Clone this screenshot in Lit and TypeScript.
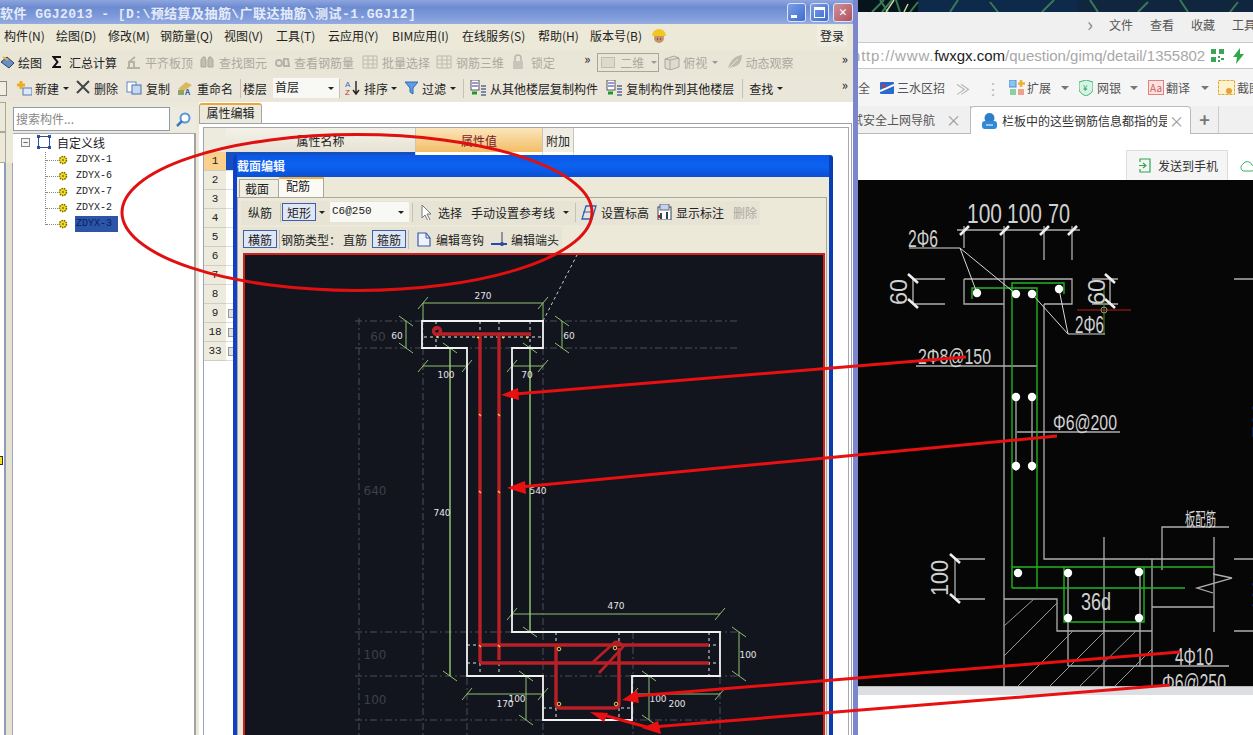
import { LitElement, html, css, svg, nothing } from 'lit'
import { customElement } from 'lit/decorators.js'

const ic: Record<string, any> = {
    layers: svg`<path d="M1 8l6-5 7 6-5 5z" fill="#6a8fc8" stroke="#345"/><path d="M3 3l5 3" stroke="#e8b030" stroke-width="2"/>`,
    sigma: svg`<path d="M9 3H1.500L5.500 8 1.500 13H9" fill="none" stroke="#111" stroke-width="2"/>`,
    align: svg`<path d="M2 14h13M4 14V8h5v6M10 3L4 8" fill="none" stroke="#b5b3a8" stroke-width="2"/>`,
    binoc: svg`<path d="M2 13V6l2-3h2l1 3v7zM9 13V6l1-3h2l2 3v7z" fill="#c2bfb0" stroke="#aaa89a"/>`,
    look: svg`<path d="M1 9a3 3 0 0 1 6 0 3 3 0 0 1-6 0M9 5h4l1 7H9z" fill="none" stroke="#b5b3a8" stroke-width="2"/>`,
    grid: svg`<path d="M1 2h14v12H1zM1 6h14M1 10h14M6 2v12M11 2v12" fill="none" stroke="#bcbaae"/>`,
    lock: svg`<rect x="1" y="7" width="10" height="8" fill="#c8c6ba"/><path d="M3 7V4a3 3 0 0 1 6 0v3" fill="none" stroke="#b8b6aa" stroke-width="1.500"/>`,
    cube: svg`<path d="M2 5l9-3 5 2v9l-9 3-5-2z" fill="#dedcd0" stroke="#aaa89c"/><path d="M7 6v10M7 6l9-2M2 5l5 1" stroke="#aaa89c" fill="none"/>`,
    orbit: svg`<path d="M1 15C3 6 8 2 15 1c0 7-4 12-10 12z" fill="#bdbbae"/><path d="M1 15L11 5" stroke="#e8e6da"/>`,
    add: svg`<path d="M5 1v8M1 5h8" stroke="#e8b020" stroke-width="3"/><rect x="7" y="8" width="9" height="7" fill="#dce8f6" stroke="#5a7ab0"/>`,
    del: svg`<path d="M1 1l12 12M13 1L1 13" stroke="#444" stroke-width="2"/>`,
    copy: svg`<rect x="1" y="2" width="9" height="10" fill="#fff" stroke="#6688bb"/><rect x="6" y="5" width="9" height="9" fill="#c4d8f0" stroke="#4a70a8"/>`,
    rename: svg`<path d="M1 9l8-7 6 3-8 6z" fill="#d8b860"/><path d="M1 10h6v5H1z" fill="#88a868"/><text x="8" y="15" font-size="8" font-weight="700" fill="#2a60a8">A</text>`,
    sort: svg`<text x="0" y="7" font-size="8" fill="#3868b8" font-family="Liberation Sans">A</text><text x="0" y="15" font-size="8" fill="#b83030" font-family="Liberation Sans">Z</text><path d="M11 1v12M8 10l3 4 3-4" fill="none" stroke="#222" stroke-width="1.400"/>`,
    filter: svg`<path d="M0 2h13L8 8v6l-3-2V8z" fill="#5f9be0" stroke="#2f6cb8"/>`,
    floorIn: svg`<rect x="1" y="0" width="8" height="10" fill="#fff" stroke="#555"/><path d="M2 3h6M2 6h6" stroke="#33a"/><path d="M2 13h5" stroke="#1a9a2a" stroke-width="3"/><path d="M11 6h5M11 9h5M11 12h5M11 15h5" stroke="#5a6a90" stroke-width="1.400"/>`,
    cursor: svg`<path d="M1 1l9 9H6l3 6-2 1-3-6-3 3z" fill="#fff" stroke="#777"/>`,
    level: svg`<path d="M5 2h10l-4 13H1z" fill="none" stroke="#2a60b8" stroke-width="1.300"/><path d="M2 8h10" stroke="#2a60b8"/>`,
    mark: svg`<rect x="1" y="3" width="13" height="13" fill="#fff" stroke="#345"/><rect x="3" y="0" width="9" height="6" fill="#c4d4ec" stroke="#667"/><path d="M4 9v6M10 8v7" stroke="#345" stroke-width="2"/><rect x="1" y="11" width="2" height="3" fill="#c22"/>`,
    hook: svg`<path d="M2 2h8l4 5v8H2z" fill="#eef2fa" stroke="#3a5aa8" stroke-width="1.200"/><path d="M10 2v5h4" fill="none" stroke="#3a5aa8"/>`,
    end: svg`<path d="M0 13h16" stroke="#2a4aa8" stroke-width="2"/><path d="M11 1v14" stroke="#667" stroke-width="1.300"/><circle cx="11" cy="13" r="2" fill="#2a4aa8"/>`,
}

interface Tool { ml?: number; i?: string; iw?: number; gap?: number; t?: string; dis?: boolean; kind?: string }

const row1: Tool[] = [
    { ml: 0, i: 'layers', iw: 14, gap: 4, t: '绘图' },
    { ml: 10, i: 'sigma', iw: 10, gap: 7, t: '汇总计算' },
    { ml: 8, i: 'align', iw: 16, gap: 4, t: '平齐板顶', dis: true },
    { ml: 6, i: 'binoc', iw: 16, gap: 4, t: '查找图元', dis: true },
    { ml: 8, i: 'look', iw: 16, gap: 3, t: '查看钢筋量', dis: true },
    { ml: 8, i: 'grid', iw: 16, gap: 4, t: '批量选择', dis: true },
    { ml: 6, i: 'grid', iw: 16, gap: 4, t: '钢筋三维', dis: true },
    { ml: 8, i: 'lock', iw: 12, gap: 7, t: '锁定', dis: true },
    { ml: 29, kind: 'chev' },
    { ml: 7, kind: 'view2d' },
    { ml: 4, i: 'cube', iw: 17, gap: 3, t: '俯视', dis: true },
    { ml: 5, kind: 'arrow', dis: true },
    { ml: 9, i: 'orbit', iw: 16, gap: 2, t: '动态观察', dis: true },
    { kind: 'chevEnd' },
]

const row2: Tool[] = [
    { kind: 'stub' },
    { ml: 9, i: 'add', iw: 16, gap: 3, t: '新建' },
    { ml: 4, kind: 'arrow' },
    { ml: 7, i: 'del', iw: 14, gap: 4, t: '删除' },
    { ml: 8, i: 'copy', iw: 16, gap: 4, t: '复制' },
    { ml: 7, i: 'rename', iw: 16, gap: 4, t: '重命名' },
    { ml: 7, kind: 'sep' },
    { ml: 2, t: '楼层' },
    { ml: 6, kind: 'floor' },
    { ml: 0, kind: 'sep' },
    { ml: 5, i: 'sort', iw: 16, gap: 3, t: '排序' },
    { ml: 3, kind: 'arrow' },
    { ml: 8, i: 'filter', iw: 13, gap: 4, t: '过滤' },
    { ml: 4, kind: 'arrow' },
    { ml: 7, kind: 'sep' },
    { ml: 6, i: 'floorIn', iw: 16, gap: 4, t: '从其他楼层复制构件' },
    { ml: 8, i: 'floorIn', iw: 16, gap: 4, t: '复制构件到其他楼层' },
    { ml: 8, kind: 'sep' },
    { ml: 6, t: '查找' },
    { ml: 4, kind: 'arrow' },
    { kind: 'chevEnd' },
]

const dlg1: Tool[] = [
    { ml: 7, t: '纵筋' },
    { ml: 8, kind: 'sep' },
    { ml: 1, kind: 'btn', t: '矩形' },
    { ml: 3, kind: 'arrow' },
    { ml: 5, kind: 'rebar' },
    { ml: 3, kind: 'sep' },
    { ml: 8, i: 'cursor', iw: 11, gap: 6, t: '选择' },
    { ml: 9, t: '手动设置参考线' },
    { ml: 8, kind: 'arrow' },
    { ml: 6, kind: 'sep' },
    { ml: 5, i: 'level', iw: 16, gap: 4, t: '设置标高' },
    { ml: 8, i: 'mark', iw: 15, gap: 4, t: '显示标注' },
    { ml: 9, t: '删除', dis: true },
]

const dlg2: Tool[] = [
    { ml: 2, kind: 'btn', t: '横筋' },
    { ml: 2, kind: 'sep' },
    { ml: 1, t: '钢筋类型：' },
    { ml: 2, t: '直筋' },
    { ml: 5, kind: 'btn', t: '箍筋' },
    { ml: 2, kind: 'sep' },
    { ml: 7, i: 'hook', iw: 16, gap: 4, t: '编辑弯钩' },
    { ml: 7, i: 'end', iw: 16, gap: 4, t: '编辑端头' },
]

const menus: [string, number][] = [
    ['构件(N)', 52], ['绘图(D)', 52], ['修改(M)', 52], ['钢筋量(Q)', 64], ['视图(V)', 52], ['工具(T)', 52],
    ['云应用(Y)', 64], ['BIM应用(I)', 70], ['在线服务(S)', 76], ['帮助(H)', 52], ['版本号(B)', 62],
]
const rowNums = ['1', '2', '3', '4', '5', '6', '7', '8', '9', '18', '33']
const members = ['ZDYX-1', 'ZDYX-6', 'ZDYX-7', 'ZDYX-2', 'ZDYX-3']

const GREEN = '#8fc070'

// dimension with its two slashed ticks
const dimH = (x1: number, x2: number, y: number, c = GREEN) => svg`
    <path d="M${x1} ${y}H${x2}M${x1 - 5} ${y + 6}l10-12M${x2 - 5} ${y + 6}l10-12" stroke="${c}" fill="none"/>`
const dimV = (x: number, y1: number, y2: number, c = GREEN) => svg`
    <path d="M${x} ${y1}V${y2}M${x - 7} ${y1 - 5}l14 10M${x - 7} ${y2 - 5}l14 10" stroke="${c}" fill="none"/>`
const lbl = (x: number, y: number, t: string, fill = '#e4e4e4', fs = 9) => svg`
    <text x="${x}" y="${y}" fill="${fill}" font-size="${fs}" text-anchor="middle" font-family="DejaVu Sans, sans-serif">${t}</text>`
const cad = (x: number, y: number, w: number, t: string, fs = 24) => svg`
    <text x="${x}" y="${y}" fill="#d0d0d0" font-size="${fs}" textLength="${w}" lengthAdjust="spacingAndGlyphs" font-family="Liberation Sans, sans-serif">${t}</text>`
const cadV = (x: number, y: number, t: string, fs = 24, w = 26) => svg`
    <text transform="translate(${x} ${y}) rotate(-90)" fill="#d0d0d0" font-size="${fs}" textLength="${w}" lengthAdjust="spacingAndGlyphs" font-family="Liberation Sans, sans-serif">${t}</text>`

@customElement('app-root')
export class AppRoot extends LitElement {
    renderTool(t: Tool) {
        const ml = `margin-left:${t.ml ?? 0}px`
        switch (t.kind) {
            case 'stub': return html`<span class="stub"></span>`
            case 'sep': return html`<span class="sep" style=${ml}></span>`
            case 'arrow': return html`<span class="arrow ${t.dis ? 'dis' : ''}" style=${ml}></span>`
            case 'chev': return html`<span class="chev" style=${ml}>»</span>`
            case 'chevEnd': return html`<span class="chev end">»</span>`
            case 'btn': return html`<span class="btn" style=${ml}>${t.t}</span>`
            case 'view2d': return html`<span class="view2d" style=${ml}><i></i><b>二维</b><span class="arrow dis"></span></span>`
            case 'floor': return html`<span class="combo floor" style=${ml}><b>首层</b><span class="arrow"></span></span>`
            case 'rebar': return html`<span class="combo rebar" style=${ml}><b>C6@250</b><span class="arrow"></span></span>`
        }
        return html`<span class="tool ${t.dis ? 'dis' : ''}" style=${ml}>
            ${t.i ? html`<svg width=${t.iw!} height="16" viewBox="0 0 ${t.iw} 16" style="margin-right:${t.gap}px">${ic[t.i]}</svg>` : nothing}
            ${t.t}
        </span>`
    }

    renderDrawing() {
        return html`<svg class="draw" viewBox="245 255 579 480" width="579" height="480">
            <g stroke="#4c4f56" fill="none" stroke-dasharray="7 3 2 3">
                <path d="M355 321H740M355 348H740M355 632H740M355 676H740M355 720H740"/>
                <path d="M359 318V735M423 318V735M467 348V735M543 348V735M633 632V735M720 632V735"/>
            </g>
            ${lbl(378, 341, '60', '#3d4047', 12)} ${lbl(375, 495, '640', '#3d4047', 12)}
            ${lbl(375, 659, '100', '#3d4047', 12)} ${lbl(375, 704, '100', '#3d4047', 12)}
            <path d="M543 321L577 255" stroke="#c8c8c8" stroke-dasharray="3 3"/>

            <path d="M423 303V320M543 303V320M450 348V676M530 348V632" stroke="${GREEN}" fill="none"/>
            ${dimH(423, 543, 303)} ${dimV(406, 321, 348)} ${dimV(562, 321, 348)}
            ${dimH(423, 467, 366)} ${dimH(512, 543, 366)}
            ${dimV(450, 348, 676)} ${dimV(530, 348, 632)}
            ${dimH(512, 720, 614)} ${dimV(739, 632, 676)}
            ${dimH(467, 543, 694)} ${dimH(633, 720, 694)}
            ${dimV(526, 676, 720)} ${dimV(649, 676, 720)}
            ${lbl(483, 299, '270')} ${lbl(397, 339, '60')} ${lbl(569, 339, '60')}
            ${lbl(446, 378, '100')} ${lbl(527, 378, '70')} ${lbl(442, 516, '740')}
            ${lbl(538, 494, '540')} ${lbl(616, 609, '470')} ${lbl(748, 658, '100')}
            ${lbl(505, 707, '170')} ${lbl(517, 702, '100')} ${lbl(658, 702, '100')} ${lbl(677, 707, '200')}

            <g stroke="#e6e6e6" fill="none" stroke-dasharray="3 3">
                <path d="M424 337H542M467 645H720M467 663H720M543 708H633"/>
                <path d="M436 321V348M480 321V348M499 321V348M530 321V348M480 645V676M499 645V676M709 632V676M556 708V720M619 708V720M556 632V645M619 632V645"/>
            </g>
            <path d="M422 321H543V348H512V632H720V676H632V720H543V676H467V348H422Z" fill="none" stroke="#f2f2f2" stroke-width="1.800"/>

            <g stroke="#b81f27" stroke-width="3.400" fill="none">
                <path d="M438 334H531"/>
                <circle cx="437" cy="331" r="3.500"/>
                <path d="M480 333V660Q480 663 483 663H709M499 333V660"/>
                <path d="M480 645H709"/>
                <path d="M556 645V704Q556 708 560 708H615Q619 708 619 704V648"/>
                <path d="M593 662L615 642Q620 641 623 647L599 673" stroke-width="2.600"/>
            </g>
            <g fill="#12151e" stroke="#f0c850">
                <circle cx="559" cy="649" r="1.800"/><circle cx="615" cy="648" r="1.800"/>
                <circle cx="559" cy="704" r="1.800"/><circle cx="616" cy="704" r="1.800"/>
            </g>
            <path d="M479 414l2 2M498 414l2 2M479 491l2 2M498 491l2 2M437 336l1 2M477 337l2 1M502 337l2 1M526 337l2 1M479 645l2 2M498 645l2 2" stroke="#f0c850" stroke-width="1.400"/>
        </svg>`
    }

    renderCad() {
        return html`<svg class="cad" viewBox="858 179 395 506" width="395" height="506">
            <g stroke="#aeaeae" fill="none" stroke-width="1.300">
                <path d="M1004 259V685M1044 303V558H1214M964 278H1072V303H1044M1004 303H964V278"/>
                <path d="M915 278H945M915 303H945M1092 278H1118M1092 303H1118M957 229H1080M964 225V247M1004 225V259M1044 225V259M1072 225V259"/>
                <path d="M1234 278H1253M1234 558H1253M1234 630H1253"/>
                <path d="M1152 558V685M1152 606H1214M1214 536V631M1213 573L1232 577L1197 587L1213 592"/>
                <path d="M1162 569V526H1229"/>
                <path d="M1004 598H1057V630H1152M1068 572V665M1140 572V665M1068 665H1229M1104 536V685"/>
                <path d="M916 365H1037M1017 431H1120M1016 396V470M1032 396V470M955 558H985M955 598H985M955 558V598"/>
            </g>
            <path d="M913 278V303" stroke="#eee"/><path d="M1110 278V303" stroke="#eee"/>
            <path d="M960 234l9-9M1000 234l9-9M1040 234l9-9M1068 234l9-9M908 273l10 9M908 298l10 9M1105 273l10 9M1105 298l10 9M950 553l10 9M950 593l10 9" stroke="#eee" stroke-width="2.600"/>
            <path d="M1004 625L1034 598M1004 655L1057 602M1018 685L1073 630M1050 685L1104 631M1080 685L1136 630M1115 685L1152 648" stroke="#9a9a9a"/>
            <g stroke="#22b422" fill="none" stroke-width="1.400">
                <path d="M972 298V287H1037V587M1012 587V282H1064V293"/>
                <path d="M1012 566H1214M1012 587H1185M1064 566V621H1144V566"/>
                <path d="M1104 287V333" stroke-width="1" stroke="#3c8a3c"/>
            </g>
            <path d="M1077 309H1131" stroke="#c01818"/><circle cx="1104" cy="309" r="3" fill="none" stroke="#88a060"/>
            <path d="M909 247H960L977 292M960 247L1016 293M1032 293L1068 333L1059 288M1068 333H1105" stroke="#d8d8d8" fill="none"/>
            <g fill="#fff">
                ${[[977, 292], [1016, 293], [1032, 293], [1059, 288], [1016, 396], [1032, 396], [1016, 465], [1032, 465], [1018, 572], [1068, 572], [1139, 571], [1068, 617], [1139, 617]].map(([x, y]) => svg`<circle cx=${x} cy=${y} r="4.200"/>`)}
            </g>
            ${cad(967, 222, 35, '100', 27)} ${cad(1007, 222, 35, '100', 27)} ${cad(1048, 222, 22, '70', 27)}
            ${cad(908, 246, 30, '2Φ6', 23)} ${cad(1075, 332, 29, '2Φ6', 23)}
            ${cad(918, 363, 73, '2Φ8@150', 22)} ${cad(1053, 429, 64, 'Φ6@200', 22)}
            ${cad(1081, 609, 30, '36d', 23)} ${cad(1175, 664, 38, '4Φ10', 23)} ${cad(1162, 690, 64, 'Φ6@250', 23)}
            ${cadV(907, 304, '60')} ${cadV(1105, 304, '60')} ${cadV(948, 595, '100', 24, 36)} ${cadV(1270, 437, '700', 24, 36)} ${cadV(1270, 610, '100', 24, 32)}
            <text x="1185" y="525" fill="#d8d8d8" font-size="18" font-family="Noto Sans CJK SC, sans-serif" textLength="31" lengthAdjust="spacingAndGlyphs">板配筋</text>
        </svg>`
    }

    render() {
        return html`<div class="app">
            <section class="browser">
                <svg class="palm" width="395" height="12" viewBox="0 0 395 12">
                    <rect width="395" height="12" fill="#06141c"/>
                    <rect x="60" width="160" height="12" fill="#0d2a4a"/><rect x="220" width="175" height="12" fill="#10263e"/>
                    <path d="M14 12L26 0M24 12L34 0M30 12L22 0M42 12L38 0M52 12L60 2M92 12L100 0M140 12L132 2M184 12L196 0M240 12L232 0M280 12L290 2M330 12L322 0M372 12L380 2" stroke="#3a7a56" stroke-width="2"/>
                    <path d="M28 12L36 0M46 12L50 4" stroke="#c8d8a0" stroke-width="1.500"/>
                </svg>
                <div class="b-menu"><span class="gt">›</span><span>文件</span><span>查看</span><span>收藏</span><span>工具</span></div>
                <div class="b-url">
                    <div class="url"><span>http://www.</span><b>fwxgx.com</b>/question/gimq/detail/1355802</div>
                    <svg width="13" height="13" viewBox="0 0 13 13"><path d="M0 0h5v5H0zM8 0h5v5H8zM0 8h5v5H0zM7 7h2v2H7zM10 9h3v2h-3zM7 11h2v2H7z" fill="#3aa655"/></svg>
                    <svg width="13" height="16" viewBox="0 0 13 16"><path d="M8 0L1 9h4l-1 7 8-10H8z" fill="#2fa84a"/></svg>
                </div>
                <div class="b-marks">
                    <span style="margin-right:10px">全</span>
                    <svg width="14" height="12" viewBox="0 0 14 12" style="margin-right:3px"><rect width="14" height="12" rx="1" fill="#2a6acc"/><path d="M0 9L14 3" stroke="#fff" stroke-width="2"/><path d="M2 3l4 2" stroke="#d33" stroke-width="2"/></svg>
                    <span>三水区招</span><span class="dbl">≫</span><span class="dots">⋮</span>
                    <svg width="16" height="16" viewBox="0 0 16 16" style="margin-right:2px"><rect width="7" height="7" fill="#8cc4f0" stroke="#4a90d0"/><rect x="1" y="9" width="6" height="6" fill="#8ad0a0"/><rect x="9" y="9" width="6" height="6" fill="#f0a090"/><path d="M12 0v7M9 3.500h7" stroke="#f0b030" stroke-width="2.500"/></svg>
                    <span>扩展</span><span class="down" style="margin:0 10px"></span>
                    <svg width="14" height="16" viewBox="0 0 14 16" style="margin-right:4px"><path d="M7 0l7 2v7q0 4-7 7-7-3-7-7V2z" fill="#d8f2e4" stroke="#3cb878"/><text x="4" y="11" font-size="8" fill="#2a9a60">¥</text></svg>
                    <span>网银</span><span class="down" style="margin:0 10px 0 9px"></span>
                    <span class="aa">Aa</span><span>翻译</span><span class="down" style="margin:0 9px 0 11px"></span>
                    <svg width="17" height="15" viewBox="0 0 17 15" style="margin-right:2px"><rect x=".5" y=".5" width="16" height="14" fill="#fdf2d0" stroke="#e0a830" stroke-dasharray="3 1"/><circle cx="11" cy="11" r="3" fill="#e8a030"/></svg>
                    <span>截图</span>
                </div>
                <div class="b-tabs">
                    <div class="tab-off"><span>试安全上网导航</span><i>×</i></div>
                    <div class="tab-on">
                        <svg width="15" height="16" viewBox="0 0 15 16"><circle cx="7.500" cy="5" r="5" fill="#2f7fc8"/><rect y="8" width="15" height="8" rx="3" fill="#2f8ad8"/><path d="M4 12h7" stroke="#fff"/></svg>
                        <span>栏板中的这些钢筋信息都指的是</span><i>×</i>
                    </div>
                    <b class="plus">+</b>
                </div>
                <div class="b-send">
                    <div class="send">
                        <svg width="12" height="15" viewBox="0 0 12 15"><path d="M1 4V1h10v13H1v-3M0 7.500h6M4 5l3 2.500L4 10" fill="none" stroke="#2fa84a" stroke-width="1.200"/></svg>
                        <span>发送到手机</span>
                    </div>
                    <svg class="cloud" width="18" height="12" viewBox="0 0 18 12"><path d="M5 11a4 4 0 0 1 0-7 5 5 0 0 1 9 1 3 3 0 0 1 0 6z" fill="none" stroke="#3cb060"/></svg>
                </div>
                ${this.renderCad()}
                <div class="b-status"></div>
            </section>

            <section class="ggj">
                <header class="title">
                    <span>软件 GGJ2013 - [D:\\预结算及抽筋\\广联达抽筋\\测试-1.GGJ12]</span>
                    <div class="caps">
                        <span class="cap"><i class="min"></i></span>
                        <span class="cap"><i class="max"></i></span>
                        <span class="cap close">✕</span>
                    </div>
                </header>
                <nav class="menu">
                    ${menus.map(([m, w]) => html`<span style="width:${w}px">${m}</span>`)}
                    <svg class="hat" width="16" height="16" viewBox="0 0 16 16"><circle cx="8" cy="10" r="5" fill="#c89068"/><path d="M1 8a7 7 0 0 1 14 0z" fill="#f0c820"/><path d="M6 11h1M9 11h1" stroke="#222"/></svg>
                    <span class="login">登录</span>
                </nav>
                <div class="bar">${row1.map(t => this.renderTool(t))}</div>
                <div class="bar">${row2.map(t => this.renderTool(t))}</div>
                <div class="main">
                    <aside class="left">
                        <div class="rail"><div class="rail-top"><i></i><i></i></div><i class="mark"></i></div>
                        <div class="nav">
                            <div class="search">
                                <span>搜索构件...</span>
                                <div><svg width="15" height="15" viewBox="0 0 15 15"><circle cx="9" cy="6" r="4.500" fill="#fff" stroke="#5a96d4" stroke-width="2"/><path d="M6 9l-5 5" stroke="#3a78c0" stroke-width="2.500"/></svg></div>
                            </div>
                            <div class="tree">
                                <div class="root">
                                    <span class="fold">−</span>
                                    <svg width="14" height="14" viewBox="0 0 14 14"><path d="M1.500 1.500h11v11h-11z" fill="none" stroke="#2a50a0"/><path d="M0 0h3v3H0zM11 0h3v3h-3zM0 11h3v3H0zM11 11h3v3h-3z" fill="#2a50a0"/></svg>
                                    <span>自定义线</span>
                                </div>
                                <div class="kids">
                                    ${members.map((m, i) => html`<div class="kid">
                                        <i class="dash"></i>
                                        <svg width="10" height="10" viewBox="0 0 10 10"><circle cx="5" cy="5" r="3.500" fill="#f4e020" stroke="#807000" stroke-width="1.600" stroke-dasharray="1.600 .8"/><circle cx="5" cy="5" r="1" fill="#807000"/></svg>
                                        <span class=${i === 4 ? 'sel' : ''}>${m}</span>
                                    </div>`)}
                                </div>
                            </div>
                        </div>
                    </aside>
                    <div class="right">
                        <div class="ptab">属性编辑</div>
                        <div class="pane">
                            <div class="sheet">
                                <div class="hd">
                                    <i class="corner"></i><span class="h-name">属性名称</span><span class="h-val">属性值</span><span class="h-add">附加</span>
                                </div>
                                ${rowNums.map((n, i) => html`<div class="rw">
                                    <span class="num ${i === 0 ? 'cur' : ''}">${n}</span>
                                    <span class="c-name ${i === 0 ? 'picked' : ''}">${i > 7 ? html`<i class="minus"></i>` : nothing}</span>
                                    <span class="c-val"></span><span class="c-add"></span>
                                </div>`)}
                            </div>
                        </div>
                    </div>
                </div>

                <div class="dialog">
                    <div class="d-title">截面编辑</div>
                    <div class="d-body">
                        <div class="d-tabs"><span class="dt">截面</span><span class="dt on">配筋</span></div>
                        <div class="d-panel">
                            <div class="d-bar one">${dlg1.map(t => this.renderTool(t))}</div>
                            <div class="d-bar two">${dlg2.map(t => this.renderTool(t))}</div>
                            <div class="canvas">${this.renderDrawing()}</div>
                        </div>
                    </div>
                </div>
            </section>

            <svg class="notes" width="1253" height="735" viewBox="0 0 1253 735">
                <ellipse cx="357" cy="212.500" rx="235" ry="78" fill="none" stroke="#e01010" stroke-width="3"/>
                <g stroke="#e81010" stroke-width="3" fill="none">
                    <path d="M966 357L515 394"/><path d="M1057 436L520 487"/>
                    <path d="M1180 652L635 696"/><path d="M1170 685L652 727"/><path d="M650 728L600 714"/>
                </g>
                <g fill="#e81010">
                    <path d="M501 395l17-7 1 12z"/><path d="M507 488l18-7 1 13z"/>
                    <path d="M622 700l15-10 2 13z"/><path d="M590 712l18 1-4 9z"/>
                    <path d="M642 728l16-7 3 13z"/>
                </g>
            </svg>
        </div>`
    }

    static styles = css`
        :host { display: block; }
        * { box-sizing: border-box; }
        .app {
            position: relative;
            width: 1253px;
            height: 735px;
            overflow: hidden;
            background: #fff;
            font: 12px 'Noto Sans CJK SC', 'Liberation Sans', sans-serif;
            color: #222;
        }
        svg { display: block; flex: none; }
        i { display: block; font-style: normal; }

        /* browser behind */
        .browser {
            position: absolute;
            left: 858px;
            top: 0;
            width: 395px;
            height: 735px;
            display: flex;
            flex-direction: column;
            overflow: hidden;
        }
        .b-menu {
            height: 30px;
            background: #f0f0f0;
            display: flex;
            align-items: center;
            gap: 17px;
            padding: 0 0 6px 229px;
            white-space: nowrap;
            color: #555;
        }
        .b-menu span { flex: none; }
        .gt { font-size: 20px; color: #888; line-height: 20px; margin-right: -3px; width: 8px; }
        .b-url {
            height: 27px;
            background: #fff;
            border-top: 1px solid #c8c8c8;
            border-bottom: 1px solid #c8c8c8;
            display: flex;
            align-items: center;
            gap: 8px;
            overflow: hidden;
        }
        .url {
            width: 351px;
            margin-left: -6px;
            flex: none;
            white-space: nowrap;
            color: #a8a8a8;
            font: 15px 'Liberation Sans', sans-serif;
        }
        .url span { letter-spacing: .8px; }
        .url b { font-weight: 400; color: #222; }
        .b-marks {
            height: 37px;
            background: #f5f5f5;
            display: flex;
            align-items: center;
            color: #555;
            white-space: nowrap;
            overflow: hidden;
            font-size: 12px;
        }
        .dbl { width: 14px; margin: 0 15px 0 11px; color: #aaa; font-size: 14px; flex: none; }
        .dots { width: 16px; text-align: center; color: #bbb; font-size: 16px; margin-right: 8px; flex: none; }
        .down { width: 0; height: 0; flex: none; border: 4px solid transparent; border-top: 4px solid #777; border-bottom: 0; }
        .aa { border: 1px solid #e08080; background: #fde4e0; color: #d06060; font-size: 10px; width: 16px; height: 15px; margin-right: 2px; text-align: center; line-height: 13px; flex: none; }
        .b-tabs {
            height: 28px;
            background: #f0f0f0;
            border-bottom: 1px solid #bbb;
            display: flex;
            align-items: flex-end;
            color: #555;
        }
        .b-tabs i { color: #999; font-size: 15px; line-height: 14px; }
        .tab-off {
            width: 113px;
            height: 27px;
            display: flex;
            align-items: center;
            justify-content: space-between;
            padding: 0 9px 0 0;
            border-right: 1px solid #bbb;
            white-space: nowrap;
            overflow: hidden;
        }
        .tab-off span { margin-left: -7px; }
        .tab-on {
            width: 221px;
            height: 28px;
            margin-bottom: -1px;
            margin-left: -1px;
            background: #fff;
            border: 1px solid #bbb;
            border-bottom: 0;
            border-radius: 4px 4px 0 0;
            display: flex;
            align-items: center;
            gap: 5px;
            padding-left: 11px;
            color: #333;
            white-space: nowrap;
        }
        .tab-on span { width: 165px; overflow: hidden; font-size: 12px; }
        .tab-on i { margin-left: -3px; }
        .plus { width: 28px; text-align: center; font-size: 18px; line-height: 26px; color: #777; border-right: 1px solid #ccc; height: 27px; }
        .b-send {
            height: 46px;
            background: #fff;
            display: flex;
            align-items: flex-end;
            justify-content: flex-end;
        }
        .send {
            width: 102px;
            height: 30px;
            background: #f5f5f5;
            border: 1px solid #ddd;
            border-bottom: 0;
            display: flex;
            align-items: center;
            gap: 7px;
            padding-left: 12px;
            margin-right: 10px;
            color: #333;
        }
        .cloud { margin: 0 -3px 8px 0; }
        .cad { background: #060606; }
        .b-status { height: 9px; background: #dcdee2; border-top: 1px solid #bbb; }

        /* main application */
        .ggj {
            position: absolute;
            left: 0;
            top: 0;
            width: 858px;
            height: 735px;
            display: flex;
            flex-direction: column;
            background: #ece9d8;
            border-right: 5px solid #7b86cf;
            overflow: hidden;
        }
        .title {
            height: 24px;
            flex: none;
            background: linear-gradient(180deg, #8ea6de, #6d8bd0 30%, #7f9bdc 70%, #96acdf);
            display: flex;
            align-items: center;
            justify-content: space-between;
            color: #e4ebf8;
            font: 700 13px 'Liberation Mono', 'Noto Sans CJK SC', monospace;
            letter-spacing: .45px;
            white-space: nowrap;
        }
        .caps { display: flex; gap: 4px; }
        .cap {
            width: 19px;
            height: 19px;
            border: 1px solid #dde4f4;
            border-radius: 3px;
            background: linear-gradient(135deg, #7c9ee4, #3e6cd0);
            display: flex;
            align-items: center;
            justify-content: center;
            color: #fff;
            letter-spacing: 0;
        }
        .cap.close { background: linear-gradient(135deg, #d09098, #b05060); font-size: 13px; width: 20px; }
        .min { width: 6px; height: 3px; background: #fff; margin: 8px 5px 0 0; }
        .max { width: 11px; height: 11px; border: 1px solid #fff; border-top-width: 3px; }
        .menu {
            height: 26px;
            flex: none;
            display: flex;
            align-items: center;
            padding: 0 0 3px 4px;
            white-space: nowrap;
        }
        .menu > span { flex: none; }
        .hat { margin-left: -1px; }
        .login { margin-left: auto; margin-right: 6px; background: #f0eee2; padding: 2px 3px; }
        .bar {
            height: 26px;
            flex: none;
            background: #e9e6d8;
            display: flex;
            align-items: center;
            padding-bottom: 2px;
            white-space: nowrap;
        }
        .bar + .bar { background: #eae7da; }
        .stub { width: 7px; height: 15px; flex: none; background: #f0eee2; border: 1px solid #8c8a80; border-left: 0; }
        .tool { display: inline-flex; align-items: center; flex: none; }
        .dis { color: #aba99d; }
        .sep { width: 1px; height: 19px; background: #c4c2b4; flex: none; }
        .arrow { width: 0; height: 0; flex: none; border: 3px solid transparent; border-top: 3px solid #222; border-bottom: 0; }
        .arrow.dis { border-top-color: #999; }
        .chev { font-size: 13px; line-height: 12px; height: 18px; color: #222; flex: none; }
        .chev.end { margin-left: auto; margin-right: 5px; }
        .view2d {
            width: 62px;
            height: 19px;
            border: 1px solid #a8a698;
            display: flex;
            align-items: center;
            flex: none;
            padding-left: 3px;
            color: #aba99d;
        }
        .view2d i { width: 14px; height: 11px; background: #dcdaca; border: 1px solid #c0beb0; margin-right: 5px; }
        .view2d b { font-weight: 400; margin-right: 7px; }
        .combo { height: 20px; background: #f8f8f4; display: flex; align-items: center; justify-content: space-between; flex: none; padding: 0 5px 0 2px; }
        .combo b { font-weight: 400; margin-top: -3px; }
        .floor { width: 66px; }
        .rebar { width: 79px; }
        .rebar b { font: 11px 'Liberation Mono', monospace; }
        .btn { width: 34px; height: 18px; background: #dfe6f4; border: 1px solid #3f5fae; flex: none; display: flex; align-items: center; justify-content: center; }

        .main { flex: 1; display: flex; min-height: 0; }
        .left { width: 199px; display: flex; flex: none; }
        .rail {
            width: 13px;
            flex: none;
            display: flex;
            flex-direction: column;
            background: linear-gradient(90deg, #fff 4px, #8f9bbd 4px, #8f9bbd 6px, #e4e2d0 6px, #e4e2d0 12px, #a8a4c0 12px);
        }
        .rail-top { height: 61px; background: #ece9d8; }
        .rail-top i { width: 6px; height: 30px; border: 1px solid #aaa89a; border-left: 0; }
        .rail-top i + i { height: 31px; }
        .rail .mark { margin-top: 293px; height: 9px; width: 3px; background: #f4e020; border: 1px solid #333; border-left: 0; }
        .nav { width: 183px; padding-top: 5px; display: flex; flex-direction: column; gap: 2px; }
        .search { height: 24px; display: flex; flex: none; }
        .search span { width: 157px; background: #fff; border: 1px solid #8c9cac; color: #888; padding-left: 2px; line-height: 22px; }
        .search div { flex: 1; background: #edebe0; display: flex; align-items: center; justify-content: center; }
        .tree { flex: 1; background: #fff; border-top: 1px solid #aab; border-right: 2px solid #a2a2a2; }
        .root { height: 16px; display: flex; align-items: center; gap: 7px; padding-left: 8px; }
        .root span:last-child { margin-left: -1px; }
        .fold { width: 9px; height: 9px; border: 1px solid #888; font-size: 9px; line-height: 7px; text-align: center; background: #f4f4f0; }
        .kids { margin-left: 32px; margin-top: 2px; border-left: 1px dotted #888; height: 73px; }
        .kid { height: 16px; display: flex; align-items: center; font: 10px 'Liberation Mono', monospace; color: #222; }
        .dash { width: 12px; border-top: 1px dotted #888; }
        .kid span { margin-left: 7px; padding: 0 1px; line-height: 16px; }
        .kid .sel { background: #2c55a8; color: #0b1c60; width: 43px; }

        .right { flex: 1; padding: 1px 1px 0 0; background: #fff; display: flex; flex-direction: column; }
        .ptab {
            width: 63px;
            height: 20px;
            flex: none;
            background: #eceadc;
            border: 1px solid #a8a89c;
            border-top: 2px solid #eea838;
            border-bottom: 0;
            border-radius: 3px 3px 0 0;
            text-align: center;
            line-height: 16px;
        }
        .pane { flex: 1; border-top: 1px solid #9aa0ac; border-right: 1px solid #9aa0ac; padding: 3px 2px 0 4px; background: #fff; min-height: 0; }
        .sheet { border-top: 1px solid #a8a8a8; border-left: 1px solid #9aa4b8; border-right: 1px solid #a8a8b0; height: 100%; }
        .hd { display: flex; height: 24px; }
        .corner { width: 22px; background: #ecebde; }
        .hd span { display: flex; align-items: center; justify-content: center; border-right: 1px solid #c8c6b8; }
        .h-name { width: 190px; background: linear-gradient(#f4f2e8, #e6e3d4); }
        .h-val { width: 127px; background: linear-gradient(#fbe6bc, #f2bd66); color: #7a1830; }
        .h-add { width: 31px; background: #f0eee4; }
        .rw { display: flex; height: 19px; }
        .num { width: 22px; background: #ecebde; border-bottom: 1px solid #d0cebf; display: flex; align-items: center; justify-content: center; font: 11px 'Liberation Mono', monospace; }
        .num.cur { background: #f9d08c; }
        .c-name { width: 190px; border-bottom: 1px solid #dcdcdc; border-right: 1px solid #dcdcdc; }
        .c-name.picked { background: #1450c0; }
        .minus { width: 6px; height: 9px; background: #e4e2d8; border: 1px solid #999; margin: 5px 0 0 2px; }
        .c-val, .c-add { border-bottom: 1px solid #dcdcdc; border-right: 1px solid #dcdcdc; }
        .c-val { width: 127px; }
        .c-add { width: 31px; }

        /* floating section editor */
        .dialog {
            position: absolute;
            left: 233px;
            top: 155px;
            width: 600px;
            height: 580px;
            background: linear-gradient(90deg, #1040c8, #0d58e0 92%, #0a3cb0);
            border-radius: 3px 3px 0 0;
            display: flex;
            flex-direction: column;
            padding: 0 4px;
        }
        .d-title {
            height: 22px;
            flex: none;
            font: 700 12px 'Noto Sans CJK SC', sans-serif;
            color: #f4f6ff;
            line-height: 21px;
            background: linear-gradient(180deg, #0a58e6, #0c62f0 50%, #0850d4);
        }
        .d-body { flex: 1; background: #ece9d8; display: flex; flex-direction: column; min-height: 0; }
        .d-tabs { height: 20px; display: flex; align-items: flex-end; padding-left: 2px; flex: none; }
        .dt { width: 40px; height: 18px; padding-right: 4px; text-align: center; line-height: 18px; background: #f0eee2; border: 1px solid #aaa89c; border-bottom: 0; }
        .dt.on { width: 45px; height: 20px; padding-right: 6px; background: #fbfaf4; border-top: 2px solid #f0b040; line-height: 14px; border-left: 0; }
        .d-panel { flex: 1; margin-right: 2px; border: 1px solid #a8a89c; border-bottom: 0; padding: 3px 0 0 3px; display: flex; flex-direction: column; min-height: 0; }
        .d-bar { height: 24px; flex: none; display: flex; align-items: center; padding-bottom: 2px; white-space: nowrap; background: #e7e4d6; }
        .d-bar.one { width: 519px; }
        .d-bar.two { width: 321px; height: 26px; margin-top: 2px; }
        .canvas { flex: 1; margin: 0 1px 0 2px; border: 2px solid #d21f1f; border-bottom: 0; background: #12151e; overflow: hidden; min-height: 0; }
        .draw { background: #12151e; }

        .notes { position: absolute; left: 0; top: 0; pointer-events: none; }
    `
}
